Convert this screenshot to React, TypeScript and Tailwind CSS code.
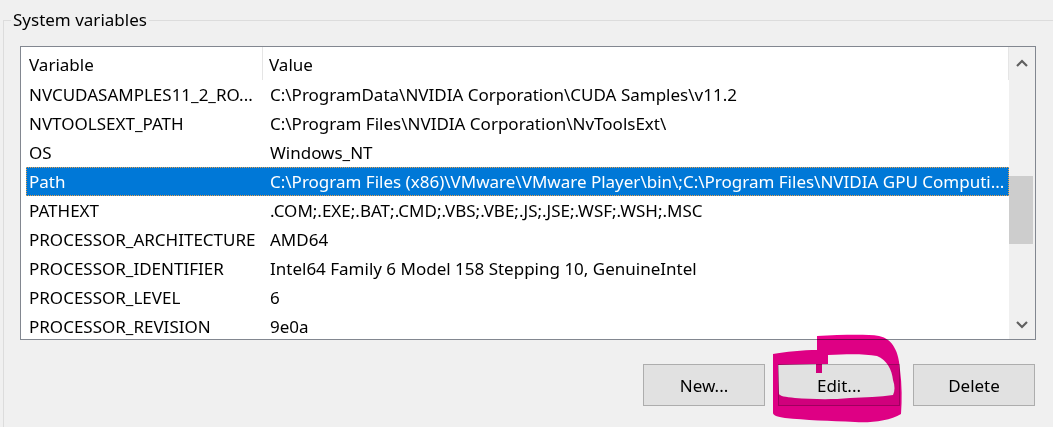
import React from "react";

type Row = { name: string; value: string; selected?: boolean };

const rows: Row[] = [
  { name: "NVCUDASAMPLES11_2_RO...", value: "C:\\ProgramData\\NVIDIA Corporation\\CUDA Samples\\v11.2" },
  { name: "NVTOOLSEXT_PATH", value: "C:\\Program Files\\NVIDIA Corporation\\NvToolsExt\\" },
  { name: "OS", value: "Windows_NT" },
  {
    name: "Path",
    value: "C:\\Program Files (x86)\\VMware\\VMware Player\\bin\\;C:\\Program Files\\NVIDIA GPU Computi...",
    selected: true,
  },
  { name: "PATHEXT", value: ".COM;.EXE;.BAT;.CMD;.VBS;.VBE;.JS;.JSE;.WSF;.WSH;.MSC" },
  { name: "PROCESSOR_ARCHITECTURE", value: "AMD64" },
  { name: "PROCESSOR_IDENTIFIER", value: "Intel64 Family 6 Model 158 Stepping 10, GenuineIntel" },
  { name: "PROCESSOR_LEVEL", value: "6" },
  { name: "PROCESSOR_REVISION", value: "9e0a" },
];

function Chevron({ up }: { up?: boolean }) {
  return (
    <svg width="12" height="8" viewBox="0 0 12 8">
      <polyline
        points={up ? "1,7 6,2 11,7" : "1,1 6,6 11,1"}
        fill="none"
        stroke="#606060"
        strokeWidth="2.2"
      />
    </svg>
  );
}

function WinButton({ label }: { label: string }) {
  return (
    <button className="w-[122px] h-[42px] bg-[#e1e1e1] border border-[#adadad] text-black text-[17px] leading-none">
      {label}
    </button>
  );
}

export default function App() {
  return (
    <div
      className="relative w-[1053px] h-[427px] overflow-hidden bg-[#f0f0f0] text-black"
      style={{ fontFamily: '"Noto Sans", "Liberation Sans", sans-serif' }}
    >
      {/* group box */}
      <div className="relative ml-[3px] mt-[20px] w-[1100px] h-[420px] border-l border-t border-[#dcdcdc]">
        <span className="absolute left-[7px] -top-[13px] px-[2px] bg-[#f0f0f0] text-[17px] leading-[24px]">
          System variables
        </span>

        <div className="ml-[16px] mt-[25px] w-[1016px] h-[294px] border border-[#828790] bg-white flex overflow-hidden">
          <div className="w-[988px] flex flex-col text-[17px]">
            {/* header */}
            <div className="h-[33px] shrink-0 flex items-center border-r border-[#e5e5e5]">
              <div className="w-[242px] h-full flex items-center pl-[8px] pt-[3px] border-r border-[#e5e5e5]">
                Variable
              </div>
              <div className="pl-[6px] pt-[3px]">Value</div>
            </div>
            {rows.map((r) => (
              <div key={r.name} className="h-[29px] shrink-0 pl-[5px] flex">
                <div
                  className={`flex-1 flex items-center whitespace-nowrap overflow-hidden ${
                    r.selected ? "bg-[#0078d7] text-white border border-dotted border-[#e9a04c]" : "border border-transparent"
                  }`}
                >
                  <div className="w-[236px] pl-[2px] shrink-0 overflow-hidden">{r.name}</div>
                  <div className="pl-[7px] overflow-hidden">{r.value}</div>
                </div>
              </div>
            ))}
          </div>

          {/* scrollbar */}
          <div className="w-[26px] ml-auto bg-[#f0f0f0] flex flex-col">
            <div className="h-[32px] flex items-center justify-center">
              <Chevron up />
            </div>
            <div className="flex-1 pt-[97px]">
              <div className="w-[24px] h-[68px] bg-[#cdcdcd]" />
            </div>
            <div className="h-[28px] flex items-center justify-center">
              <Chevron />
            </div>
          </div>
        </div>

        <div className="ml-[16px] mt-[24px] w-[1016px] flex justify-end gap-[13px] pr-[1px]">
          <WinButton label="New..." />
          <WinButton label="Edit..." />
          <WinButton label="Delete" />
        </div>
      </div>

      {/* marker scribble around Edit */}
      <svg
        className="absolute left-[765px] top-[330px] mix-blend-multiply pointer-events-none"
        width="145"
        height="97"
        viewBox="0 0 145 97"
      >
        <path
          fillRule="evenodd"
          fill="#ec008c"
          d="M8 24 C20 22 38 20 52 20 L52 6 C75 5 100 4 114 6 C128 9 134 22 135 40 C137 55 137 70 136 84 C125 91 105 93 90 92 C65 91 40 90 20 88 C12 87 8 85 8 83 Z
             M13 35 L51 34 L51 43 L57 43 L57 34 L63 34 L63 25 C85 24 100 24 112 26 C122 30 127 40 128 50 C130 56 130 61 128 65 C115 67 100 67 85 68 C65 70 45 69 30 68 C20 67 15 66 14 64 Z"
        />
      </svg>
    </div>
  );
}
